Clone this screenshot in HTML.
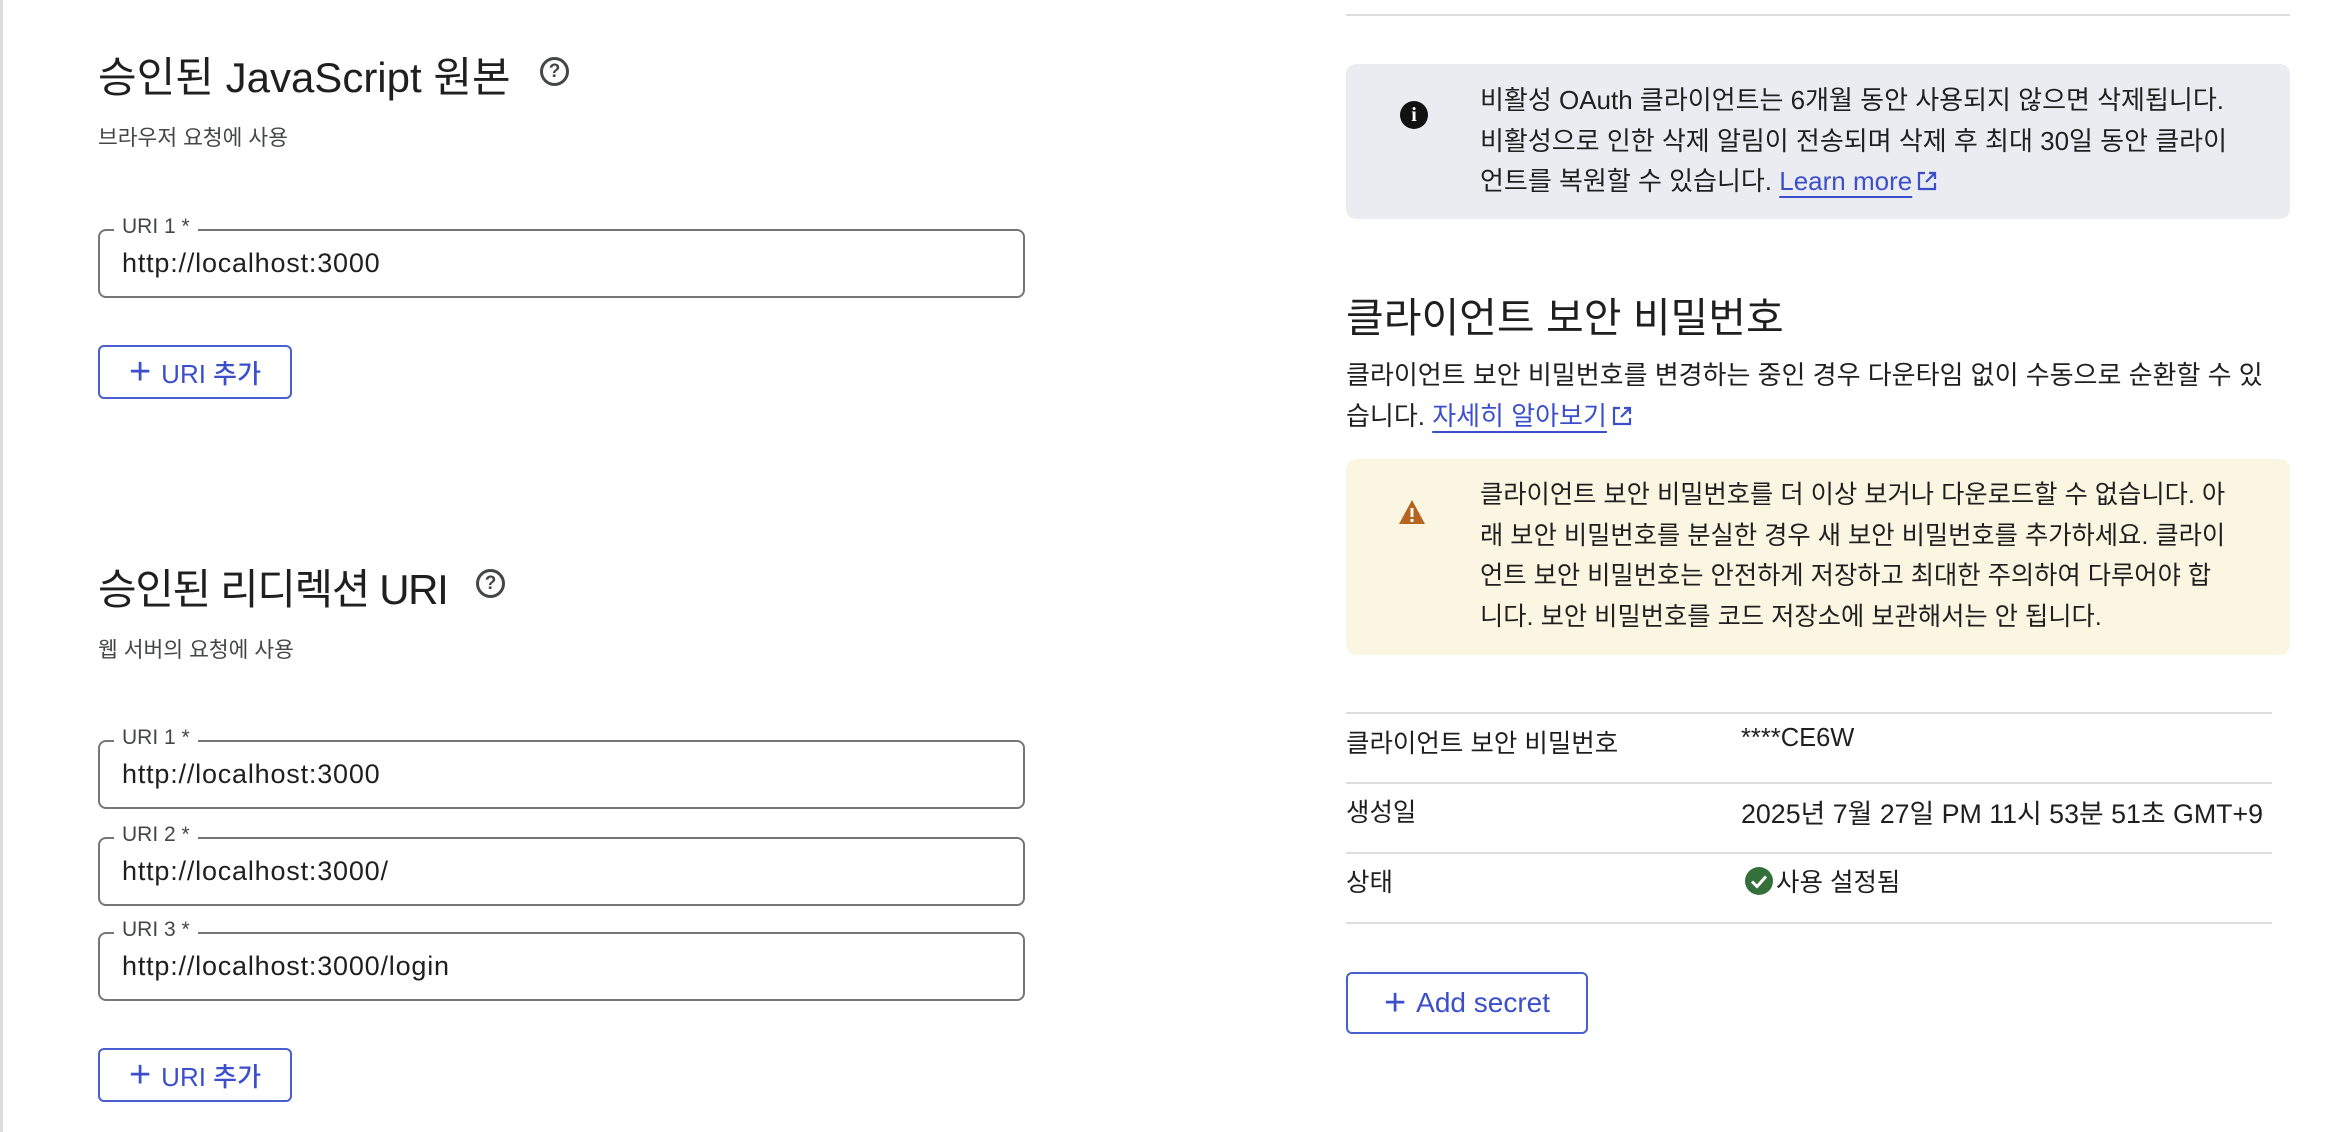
<!DOCTYPE html>
<html><head><meta charset="utf-8"><style>
*{margin:0;padding:0;box-sizing:border-box}
body{width:2332px;height:1132px;background:#fff;position:relative;overflow:hidden;font-family:"Liberation Sans","Noto Sans CJK KR",sans-serif;color:#1f1f1f}
.a{position:absolute;white-space:nowrap}
.vl{position:absolute;left:0;top:0;width:3px;height:1132px;background:#dadce0}
h2{position:absolute;font-weight:400;font-size:42px;color:#1f1f1f;white-space:nowrap}
.sub{position:absolute;font-size:21.5px;color:#444746}
.inp{position:absolute;left:98px;width:927px;height:69px;border:2px solid #747775;border-radius:8px}
.inp .lb{position:absolute;left:14px;top:-16px;background:#fff;padding:0 8px;font-size:21px;color:#444746}
.inp .v{position:absolute;left:22px;top:17px;font-size:27px;letter-spacing:0.8px;color:#1f1f1f}
.btn{position:absolute;border:2px solid #4a5fcf;border-radius:6px;color:#3b4fcc;font-size:26px;font-weight:500;display:flex;align-items:center;justify-content:center;gap:10px}
.btn b{font-size:38px;font-weight:400;line-height:1}
.help{position:absolute;width:29px;height:29px;border:3px solid #444746;border-radius:50%;font-size:19px;font-weight:700;text-align:center;line-height:23px;color:#444746}
.box{position:absolute;left:1346px;width:944px;border-radius:10px}
.txt{position:absolute;left:134px;line-height:40.5px;white-space:nowrap;color:#1f1f1f}
a{color:#3b4fcc;text-decoration:underline;text-decoration-thickness:2px;text-underline-offset:6px}
.hr{position:absolute;left:1346px;width:926px;height:2px;background:#dadce0}
.t{position:absolute;font-size:25.5px;white-space:nowrap}
.ext{display:inline-block;vertical-align:-2px;margin-left:4px}
</style></head><body>
<div class="vl"></div>
<h2 style="left:98px;top:44px">승인된 JavaScript 원본</h2>
<div class="help" style="left:540px;top:57px">?</div>
<div class="sub" style="left:98px;top:121px">브라우저 요청에 사용</div>
<div class="inp" style="top:229px"><span class="lb">URI 1 *</span><span class="v">http://localhost:3000</span></div>
<div class="btn" style="left:98px;top:345px;width:194px;height:54px"><b>+</b>URI 추가</div>

<h2 style="left:98px;top:556px;letter-spacing:-1.4px">승인된 리디렉션 URI</h2>
<div class="help" style="left:476px;top:569px">?</div>
<div class="sub" style="left:98px;top:633px">웹 서버의 요청에 사용</div>
<div class="inp" style="top:740px"><span class="lb">URI 1 *</span><span class="v">http://localhost:3000</span></div>
<div class="inp" style="top:837px"><span class="lb">URI 2 *</span><span class="v">http://localhost:3000/</span></div>
<div class="inp" style="top:932px"><span class="lb">URI 3 *</span><span class="v">http://localhost:3000/login</span></div>
<div class="btn" style="left:98px;top:1048px;width:194px;height:54px"><b>+</b>URI 추가</div>

<div class="hr" style="top:14px;width:944px"></div>
<div class="box" style="top:64px;height:155px;background:#ebecf1">
<div style="position:absolute;left:54px;top:37px;width:28px;height:28px;border-radius:50%;background:#111;color:#fff;font:700 20px 'Liberation Serif',serif;text-align:center;line-height:28px">i</div>
<div class="txt" style="top:16px;font-size:26px">비활성 OAuth 클라이언트는 6개월 동안 사용되지 않으면 삭제됩니다.<br>비활성으로 인한 삭제 알림이 전송되며 삭제 후 최대 30일 동안 클라이<br>언트를 복원할 수 있습니다. <a>Learn more</a><svg class="ext" width="22" height="22" viewBox="0 0 22 22"><path d="M9 3H3v16h16v-6M13 3h6v6M19 3l-9 9" stroke="#3b4fcc" stroke-width="2.2" fill="none"/></svg></div>
</div>
<div class="a" style="left:1346px;top:284px;font-size:41px">클라이언트 보안 비밀번호</div>
<div class="a" style="left:1346px;top:355px;font-size:26px;line-height:41px">클라이언트 보안 비밀번호를 변경하는 중인 경우 다운타임 없이 수동으로 순환할 수 있<br>습니다. <a>자세히 알아보기</a><svg class="ext" width="22" height="22" viewBox="0 0 22 22"><path d="M9 3H3v16h16v-6M13 3h6v6M19 3l-9 9" stroke="#3b4fcc" stroke-width="2.2" fill="none"/></svg></div>
<div class="box" style="top:459px;height:196px;background:#fbf6e1">
<svg style="position:absolute;left:52px;top:40px" width="28" height="26" viewBox="0 0 28 26"><path d="M14 1L27 25H1Z" fill="#b5651d"/><rect x="12.5" y="9" width="3" height="9" fill="#fff"/><rect x="12.5" y="20" width="3" height="3" fill="#fff"/></svg>
<div class="txt" style="top:16px;font-size:25.3px">클라이언트 보안 비밀번호를 더 이상 보거나 다운로드할 수 없습니다. 아<br>래 보안 비밀번호를 분실한 경우 새 보안 비밀번호를 추가하세요. 클라이<br>언트 보안 비밀번호는 안전하게 저장하고 최대한 주의하여 다루어야 합<br>니다. 보안 비밀번호를 코드 저장소에 보관해서는 안 됩니다.</div>
</div>
<div class="hr" style="top:712px"></div>
<div class="hr" style="top:782px"></div>
<div class="hr" style="top:852px"></div>
<div class="hr" style="top:922px"></div>
<div class="t" style="left:1346px;top:723px">클라이언트 보안 비밀번호</div>
<div class="t" style="left:1741px;top:724px">****CE6W</div>
<div class="t" style="left:1346px;top:792px">생성일</div>
<div class="t" style="left:1741px;top:792px;font-size:26.8px">2025년 7월 27일 PM 11시 53분 51초 GMT+9</div>
<div class="t" style="left:1346px;top:862px">상태</div>
<svg style="position:absolute;left:1745px;top:867px" width="28" height="28" viewBox="0 0 28 28"><circle cx="14" cy="14" r="14" fill="#34703a"/><path d="M7 14.5l5 5 9-10" stroke="#fff" stroke-width="3" fill="none"/></svg>
<div class="t" style="left:1776px;top:862px">사용 설정됨</div>
<div class="btn" style="left:1346px;top:972px;width:242px;height:62px;font-size:28px"><b>+</b>Add secret</div>
</body></html>
